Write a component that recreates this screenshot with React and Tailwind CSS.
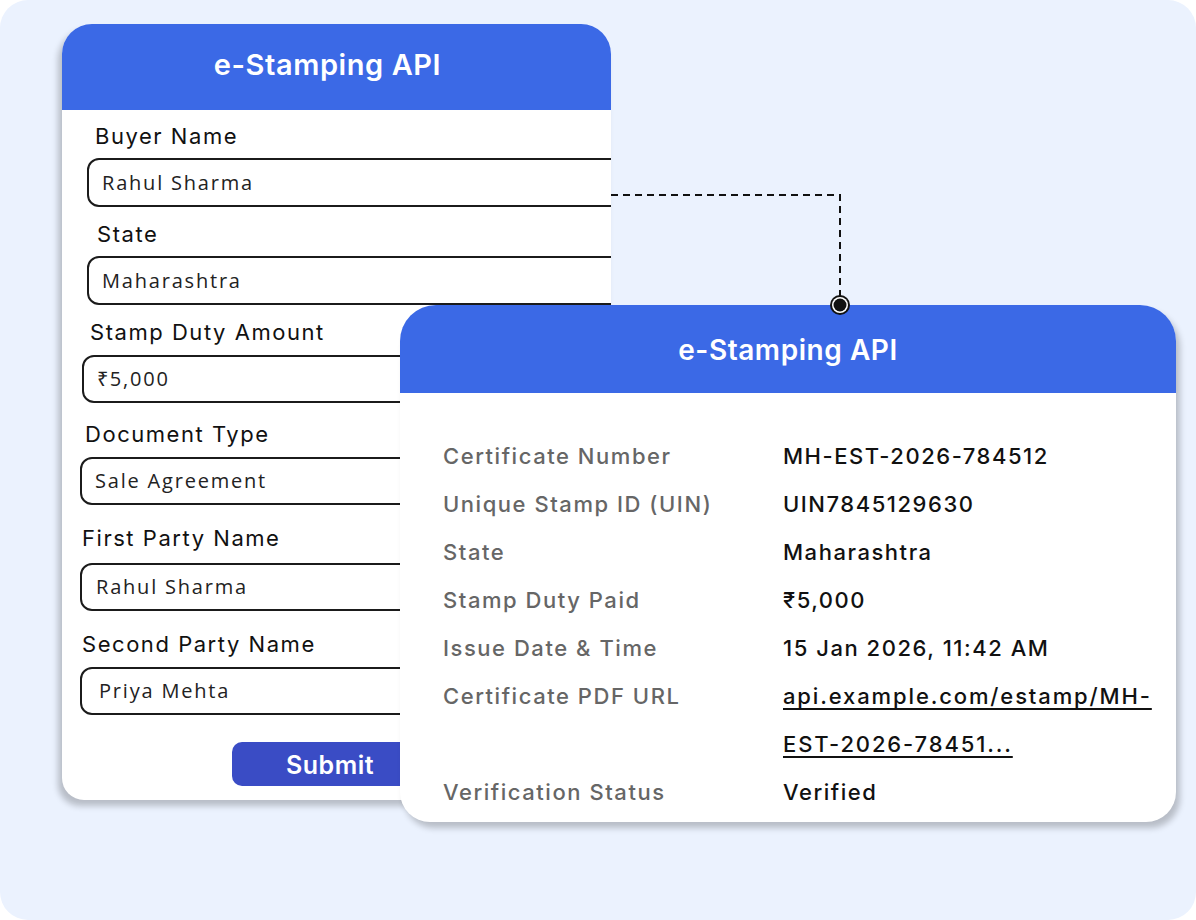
import React from "react";

const Field = ({ label, value, labelClass, inputClass, textClass }) => (
  <div className="flex flex-col">
    <div className={`h-[30px] leading-[30px] text-[22px] tracking-[0.07em] text-[#111] ${labelClass}`}>{label}</div>
    <div
      className={`w-[620px] border-2 border-[#1b1b1b] rounded-[12px] flex items-center text-[20px] tracking-[0.09em] text-[#222] font-['Open_Sans',sans-serif] ${inputClass}`}
    >
      <span className={textClass}>{value}</span>
    </div>
  </div>
);

const rows = [
  ["Certificate Number", "MH-EST-2026-784512"],
  ["Unique Stamp ID (UIN)", "UIN7845129630"],
  ["State", "Maharashtra"],
  ["Stamp Duty Paid", "₹5,000"],
  ["Issue Date & Time", "15 Jan 2026, 11:42 AM"],
];

export default function App() {
  return (
    <div className="w-[1196px] h-[920px] bg-white font-['Inter',sans-serif]">
      <div className="relative w-[1196px] h-[920px] rounded-[28px] bg-[#ebf2fe] overflow-hidden pt-[24px] pl-[62px]">
        {/* form card */}
        <div className="w-[549px] h-[776px] bg-white rounded-t-[30px] rounded-bl-[22px] overflow-hidden shadow-[-4px_6px_6px_rgba(0,0,0,0.22)] flex flex-col">
          <div className="h-[86px] pb-[4px] pr-[18px] bg-[#3b69e6] flex items-center justify-center text-white text-[29px] tracking-[0.02em] font-semibold">
            e-Stamping API
          </div>
          <div className="flex flex-col pt-[11px]">
            <Field
              label="Buyer Name"
              value="Rahul Sharma"
              labelClass="ml-[33px]"
              inputClass="ml-[25px] mt-[7px] h-[49px]"
              textClass="ml-[13px]"
            />
            <Field
              label="State"
              value="Maharashtra"
              labelClass="ml-[35px] mt-[12px]"
              inputClass="ml-[25px] mt-[7px] h-[49px]"
              textClass="ml-[13px]"
            />
            <Field
              label="Stamp Duty Amount"
              value="₹5,000"
              labelClass="ml-[28px] mt-[12px]"
              inputClass="ml-[20px] mt-[8px] h-[48px]"
              textClass="ml-[13px]"
            />
            <Field
              label="Document Type"
              value="Sale Agreement"
              labelClass="ml-[23px] mt-[16px]"
              inputClass="ml-[18px] mt-[8px] h-[48px]"
              textClass="ml-[13px]"
            />
            <Field
              label="First Party Name"
              value="Rahul Sharma"
              labelClass="ml-[20px] mt-[18px]"
              inputClass="ml-[18px] mt-[10px] h-[48px]"
              textClass="ml-[14px]"
            />
            <Field
              label="Second Party Name"
              value="Priya Mehta"
              labelClass="ml-[20px] mt-[18px]"
              inputClass="ml-[18px] mt-[8px] h-[48px]"
              textClass="ml-[17px]"
            />
            <button className="ml-[170px] mt-[27px] w-[196px] h-[44px] pt-[3px] rounded-[10px] bg-[#3a4cc5] text-white text-[25px] tracking-[0.02em] font-semibold">
              Submit
            </button>
          </div>
        </div>

        {/* connector */}
        <svg className="absolute left-0 top-0" width="1196" height="920">
          <path d="M611 195 H840 V300" fill="none" stroke="#111" strokeWidth="2" strokeDasharray="7 5" />
        </svg>

        {/* result card */}
        <div className="absolute left-[400px] top-[305px] w-[776px] h-[517px] bg-white rounded-t-[36px] rounded-b-[30px] overflow-hidden shadow-[4px_6px_6px_rgba(0,0,0,0.22)] flex flex-col">
          <div className="h-[88px] pt-[2px] bg-[#3b69e6] flex items-center justify-center text-white text-[28px] tracking-[0.02em] font-semibold">
            e-Stamping API
          </div>
          <div className="flex flex-col pt-[39px] pl-[43px] text-[22px] tracking-[0.07em] leading-[48px] font-medium">
            {rows.map(([k, v]) => (
              <div key={k} className="flex">
                <div className="w-[340px] text-[#666]">{k}</div>
                <div className="text-[#111]">{v}</div>
              </div>
            ))}
            <div className="flex">
              <div className="w-[340px] text-[#666]">Certificate PDF URL</div>
              <div className="text-[#111] tracking-[0.085em] underline underline-offset-4">
                api.example.com/estamp/MH-
                <br />
                EST-2026-78451...
              </div>
            </div>
            <div className="flex">
              <div className="w-[340px] text-[#666]">Verification Status</div>
              <div className="text-[#111]">Verified</div>
            </div>
          </div>
        </div>

        <svg className="absolute left-[828px] top-[293px]" width="24" height="24">
          <circle cx="12" cy="12" r="10" fill="#111" />
          <circle cx="12" cy="12" r="8" fill="white" />
          <circle cx="12" cy="12" r="6.5" fill="#111" />
        </svg>
      </div>
    </div>
  );
}
